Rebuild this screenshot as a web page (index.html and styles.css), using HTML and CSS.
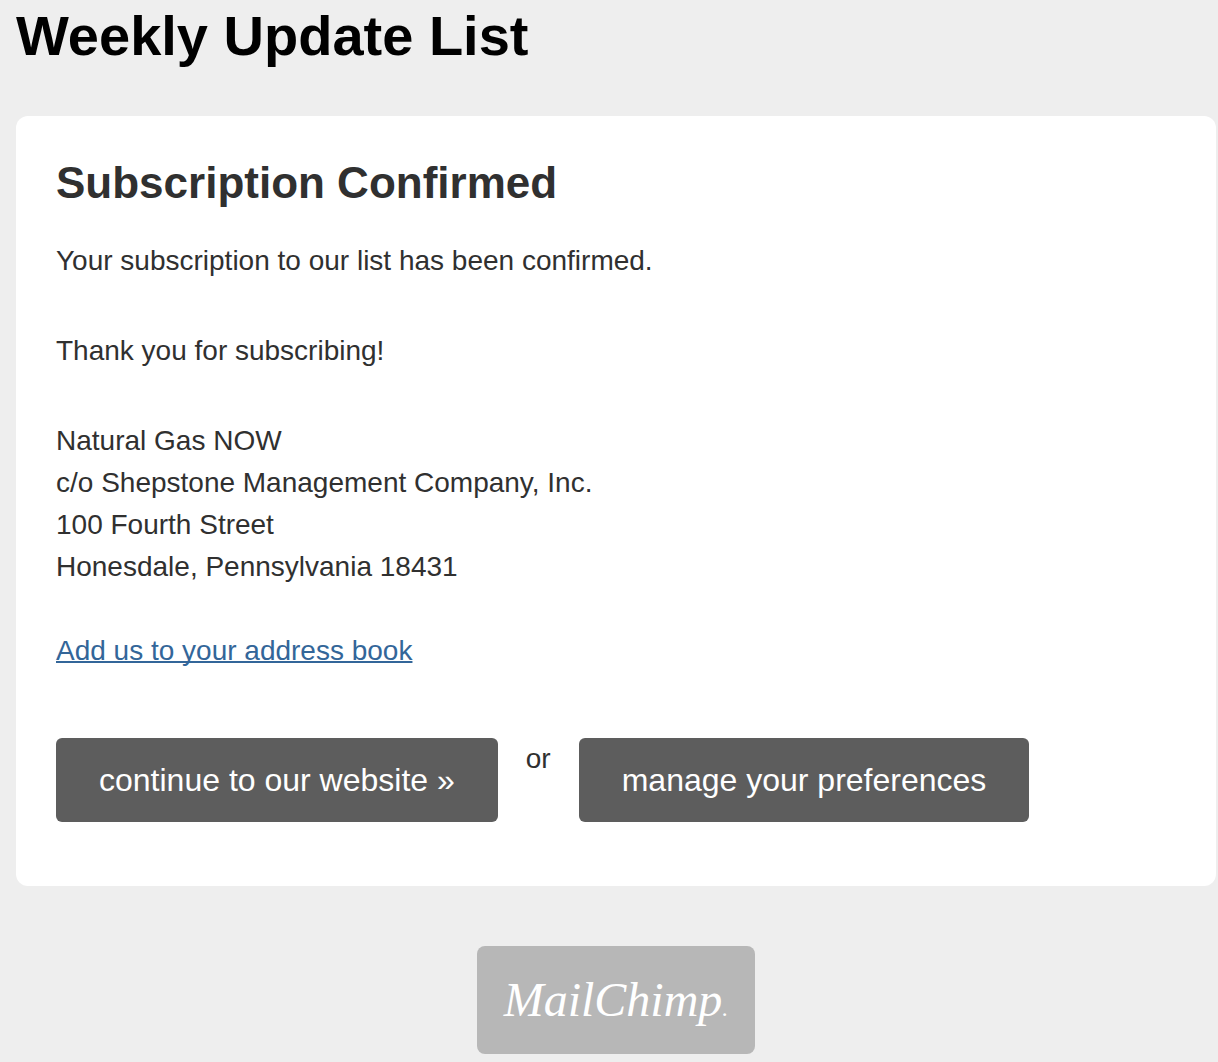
FILE: index.html
```html
<!DOCTYPE html>
<html lang="en">
<head>
  <meta charset="UTF-8" />
  <meta name="viewport" content="width=device-width, initial-scale=1" />
  <title>Weekly Update List</title>
  <link rel="stylesheet" href="styles.css">
</head>
<body>
  <div class="wrapper">
    <h1>Weekly Update List</h1>

    <div class="card">
      <h2>Subscription Confirmed</h2>
      <p>Your subscription to our list has been confirmed.</p>
      <p>Thank you for subscribing!</p>

      <address>
        Natural Gas NOW<br>
        c/o Shepstone Management Company, Inc.<br>
        100 Fourth Street<br>
        Honesdale, Pennsylvania 18431
      </address>
      <a class="vcard" href="#">Add us to your address book</a>

      <div class="button-group">
        <a class="button" href="#">continue to our website »</a>
        <span>or</span>
        <a class="button" href="#">manage your preferences</a>
      </div>
    </div>

    <div class="footer">
      <a class="badge" href="#">MailChimp<span class="dot">.</span></a>
    </div>
  </div>
</body>
</html>
```

FILE: styles.css
```css
body {
  font-family: "Liberation Sans", Helvetica, Arial, sans-serif;
  font-size: 28px;
  line-height: 42px;
  margin: 0;
  background-color: #eee;
  color: #303030;
}

.wrapper {
  padding: 0 2px 8px 16px;
}

h1 {
  margin: 0;
  padding: 4px 0 48px;
  font-size: 56px;
  line-height: 64px;
  color: #000;
}

.card {
  background-color: #fff;
  border-radius: 12px;
  padding: 40px 40px 64px;
}

h2 {
  margin: 0 0 30px;
  font-size: 44px;
  line-height: 54px;
}

p {
  margin: 0 0 48px;
}

address {
  font-style: normal;
  margin-bottom: 42px;
}

.vcard {
  color: #336699;
  text-decoration-thickness: 2px;
  text-decoration-skip-ink: none;
}

.button-group {
  display: flex;
  flex-wrap: wrap;
  gap: 28px;
  margin-top: 66px;
}

.button {
  padding: 0 43px;
  border-radius: 6px;
  background-color: #5d5d5d;
  color: #fff;
  font-size: 32px;
  line-height: 84px;
  text-decoration: none;
}

.button:hover {
  background-color: #444;
}

.footer {
  display: flex;
  justify-content: center;
  padding-top: 60px;
}

.badge {
  padding: 0 27px;
  border-radius: 8px;
  background-color: #b7b7b7;
  color: #fff;
  font-family: "Liberation Serif", "Times New Roman", serif;
  font-size: 48px;
  font-style: italic;
  line-height: 108px;
  text-decoration: none;
}

.dot {
  font-size: 24px;
  line-height: 24px;
}
```
